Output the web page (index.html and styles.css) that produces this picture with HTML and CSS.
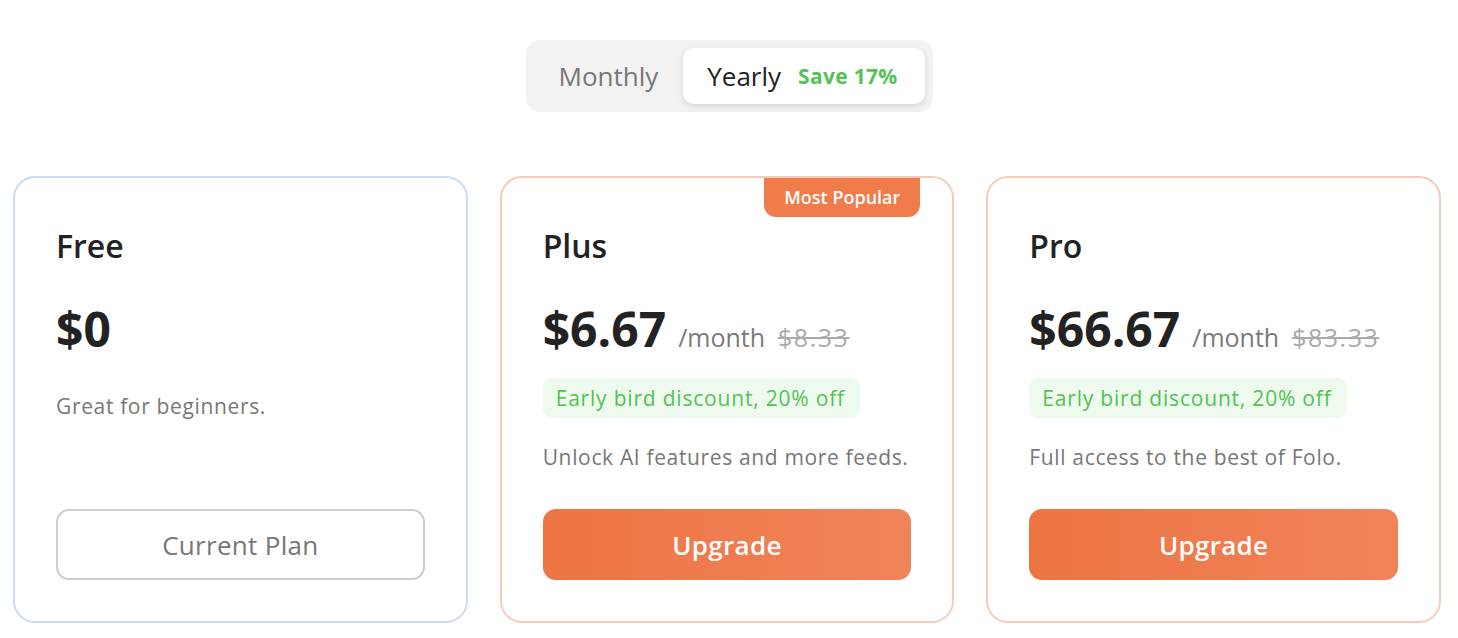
FILE: index.html
```html
<!DOCTYPE html>
<html lang="en">
<head>
  <meta charset="UTF-8" />
  <meta name="viewport" content="width=device-width, initial-scale=1.0"/>
  <title>Plans</title>
  <link rel="stylesheet" href="styles.css">
</head>
<body>
  <div class="toggle-wrap">
    <div class="toggle">
      <button class="toggle-btn">Monthly</button>
      <button class="toggle-btn active">Yearly <span class="save">Save 17%</span></button>
    </div>
  </div>

  <div class="plans">
    <div class="card free">
      <h3 class="plan-name">Free</h3>
      <div class="price-row">
        <span class="price">$0</span>
      </div>
      <p class="desc desc-free">Great for beginners.</p>
      <button class="btn btn-outline">Current Plan</button>
    </div>

    <div class="card paid">
      <div class="popular">Most Popular</div>
      <h3 class="plan-name">Plus</h3>
      <div class="price-row">
        <span class="price">$6.67</span>
        <span class="per">/month</span>
        <span class="old">$8.33</span>
      </div>
      <div class="discount">Early bird discount, 20% off</div>
      <p class="desc">Unlock AI features and more feeds.</p>
      <button class="btn btn-primary">Upgrade</button>
    </div>

    <div class="card paid">
      <h3 class="plan-name">Pro</h3>
      <div class="price-row">
        <span class="price">$66.67</span>
        <span class="per">/month</span>
        <span class="old">$83.33</span>
      </div>
      <div class="discount">Early bird discount, 20% off</div>
      <p class="desc">Full access to the best of Folo.</p>
      <button class="btn btn-primary">Upgrade</button>
    </div>
  </div>
</body>
</html>
```

FILE: styles.css
```css
body {
  font-family: "Open Sans", "Noto Sans", sans-serif;
  margin: 0;
  background: #fff;
  color: #222;
}
button {
  font-family: inherit;
  cursor: pointer;
}
.toggle-wrap {
  display: flex;
  justify-content: center;
  padding-top: 40px;
}
.toggle {
  display: flex;
  align-items: center;
  background: #f2f2f2;
  border-radius: 14px;
  padding: 8px;
  height: 56px;
}
.toggle-btn {
  border: none;
  background: transparent;
  height: 56px;
  font-size: 26px;
  color: #777;
  padding: 0 25px;
  border-radius: 11px;
  display: flex;
  align-items: center;
}
.toggle-btn.active {
  background: #fff;
  color: #222;
  box-shadow: 0 2px 6px rgba(0,0,0,0.12);
  padding: 0 27px 0 24px;
}
.save {
  color: #55c154;
  font-weight: 700;
  font-size: 21px;
  letter-spacing: 0.3px;
  margin-left: 17px;
}
.plans {
  display: grid;
  grid-template-columns: repeat(3, 1fr);
  gap: 32px;
  padding: 0 17px 0 13px;
  margin-top: 64px;
}
.card {
  position: relative;
  display: flex;
  flex-direction: column;
  align-items: flex-start;
  height: 447px;
  box-sizing: border-box;
  border: 2px solid #f5cbbb;
  border-radius: 22px;
  padding: 48px 41px 41px;
}
.card.free {
  border-color: #cbdaf3;
}
.popular {
  position: absolute;
  top: 0;
  right: 32px;
  background: #f07b4b;
  color: #fff;
  font-size: 18px;
  font-weight: 600;
  padding: 0 20px;
  height: 39px;
  line-height: 38px;
  border-radius: 0 0 12px 12px;
}
.plan-name {
  margin: 0;
  font-size: 32px;
  font-weight: 600;
  line-height: 40px;
}
.price-row {
  display: flex;
  align-items: baseline;
  margin-top: 38px;
  line-height: 50px;
}
.price {
  font-size: 48px;
  font-weight: 700;
}
.per {
  font-size: 25px;
  color: #7a7a7a;
  margin-left: 12px;
}
.old {
  font-size: 25px;
  color: #aaa;
  letter-spacing: 1.5px;
  text-decoration: line-through;
  margin-left: 13px;
}
.discount {
  margin-top: 16px;
  background: #eefaee;
  color: #55c154;
  font-size: 21px;
  letter-spacing: 0.8px;
  line-height: 40px;
  padding: 0 15px 0 13px;
  border-radius: 9px;
}
.desc {
  margin: 25px 0 0;
  font-size: 21px;
  letter-spacing: 0.65px;
  color: #777;
  line-height: 28px;
}
.desc-free {
  margin-top: 38px;
}
.btn {
  margin-top: auto;
  width: 100%;
  height: 71px;
  border-radius: 13px;
  font-size: 26px;
  letter-spacing: 0.3px;
}
.btn-outline {
  background: #fff;
  border: 2px solid #cdcdcd;
  color: #777;
}
.btn-primary {
  border: none;
  background: linear-gradient(90deg, #ee7444, #f08459);
  color: #fff;
  font-weight: 600;
}
```
